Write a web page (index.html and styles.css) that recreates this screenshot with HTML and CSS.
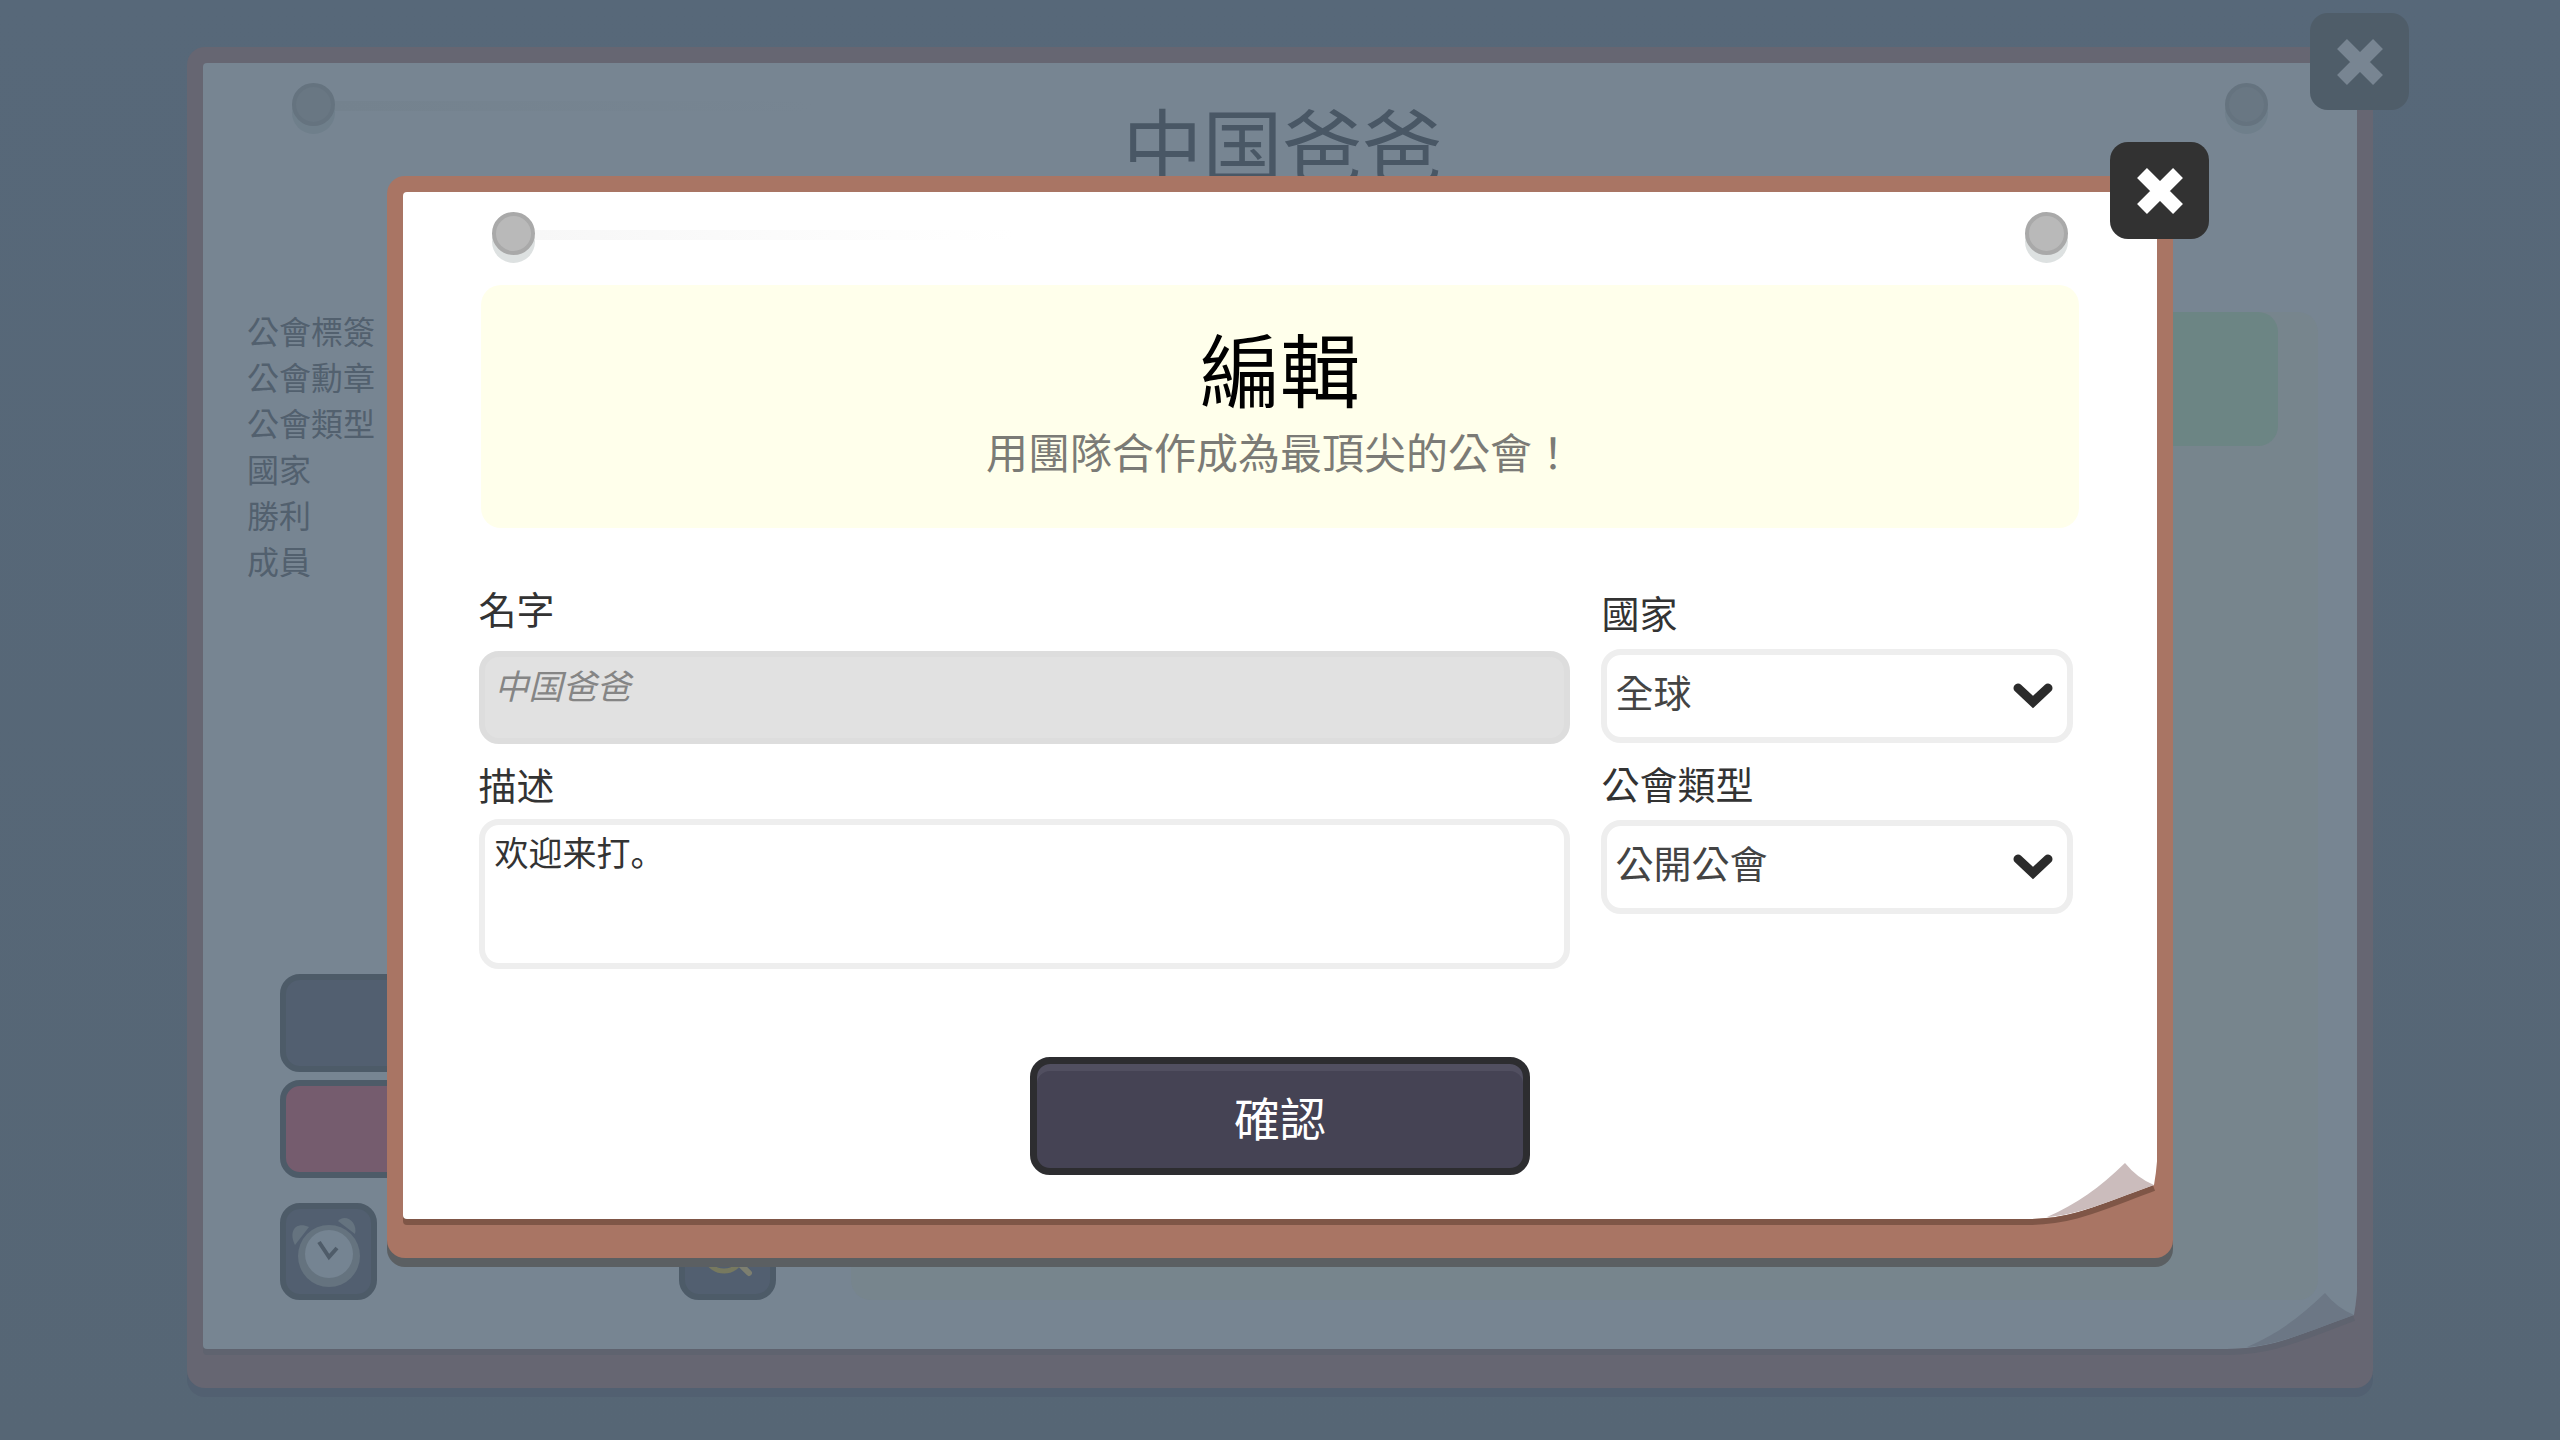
FILE: index.html
```html
<!DOCTYPE html>
<html lang="zh-Hant">
<head>
  <meta charset="UTF-8">
  <meta name="viewport" content="width=device-width, initial-scale=1">
  <title>公會</title>
  <link rel="stylesheet" href="styles.css">
</head>
<body>

  <!-- Guild page, dimmed behind the dialog -->
  <main class="panel panel-guild">
    <div class="paper guild">
      <span class="pin pin-left"></span>
      <span class="pin pin-right"></span>
      <h1 lang="zh-Hans">中国爸爸</h1>

      <div class="guild-main">
        <div class="sidebar">
          <ul class="facts">
            <li>公會標簽</li>
            <li>公會勳章</li>
            <li>公會類型</li>
            <li>國家</li>
            <li>勝利</li>
            <li>成員</li>
          </ul>
          <div class="actions">
            <button class="wide-button" type="button" aria-label="編輯"></button>
            <button class="wide-button leave" type="button" aria-label="離開"></button>
            <div class="tools">
              <button class="tool" type="button" aria-label="clock">
                <svg viewBox="0 0 97 97">
                  <path d="M15 42 C8 28 16 18 29 24 Z" fill="#65737f"/>
                  <path d="M58 18 C66 10 78 20 75 31 Z" fill="#65737f"/>
                  <circle cx="49" cy="53" r="31" fill="#65737f"/>
                  <circle cx="49" cy="51" r="24" fill="#758492"/>
                  <path d="M39 39 L49 54 L57 45" fill="none" stroke="#4f5c69" stroke-width="4"/>
                </svg>
              </button>
              <button class="tool" type="button" aria-label="search">
                <svg viewBox="0 0 97 97">
                  <circle cx="45" cy="49" r="19" fill="none" stroke="#77795f" stroke-width="5"/>
                  <path d="M58 58 L70 70" stroke="#7d7f70" stroke-width="6" stroke-linecap="round"/>
                </svg>
              </button>
            </div>
          </div>
        </div>
        <div class="members">
          <div class="member"></div>
        </div>
      </div>

      <svg class="curl" viewBox="0 0 134 110">
        <path d="M0 101 C45 101 70 88 127 67 Q132 40 131 0 H134 V110 H0 Z" fill="#666672"/>
        <path d="M0 104 C45 104 70 91 127 70" fill="none" stroke="#5f636f" stroke-width="6"/>
        <path d="M20 99 C50 86 72 70 98 45 Q110 60 127 67 C75 86 50 97 20 99 Z" fill="#6c7785"/>
      </svg>
    </div>
    <button class="close" type="button" aria-label="close">
      <svg viewBox="0 0 52 52"><path d="M8 8 L44 44 M44 8 L8 44" stroke="currentColor" stroke-width="14"/></svg>
    </button>
  </main>

  <!-- Edit dialog -->
  <div class="overlay">
    <div class="panel panel-dialog" role="dialog" aria-labelledby="dialogTitle">
      <form class="paper dialog">
        <span class="pin pin-left"></span>
        <span class="pin pin-right"></span>

        <header class="banner">
          <h2 id="dialogTitle">編輯</h2>
          <p>用團隊合作成為最頂尖的公會！</p>
        </header>

        <div class="fields">
          <div class="column">
            <div class="field field-name">
              <label for="name">名字</label>
              <input id="name" type="text" value="中国爸爸" lang="zh-Hans" disabled>
            </div>
            <div class="field field-area">
              <label for="description" lang="zh-Hans">描述</label>
              <textarea id="description" lang="zh-Hans">欢迎来打。</textarea>
            </div>
          </div>
          <div class="column column-selects">
            <div class="field">
              <label for="country">國家</label>
              <div class="select">
                <select id="country">
                  <option>全球</option>
                </select>
                <svg viewBox="0 0 40 26"><path d="M5 5 L20 19 L35 5" fill="none" stroke="#2b2b2b" stroke-width="9" stroke-linecap="round"/></svg>
              </div>
            </div>
            <div class="field">
              <label for="type">公會類型</label>
              <div class="select">
                <select id="type">
                  <option>公開公會</option>
                </select>
                <svg viewBox="0 0 40 26"><path d="M5 5 L20 19 L35 5" fill="none" stroke="#2b2b2b" stroke-width="9" stroke-linecap="round"/></svg>
              </div>
            </div>
          </div>
        </div>

        <button class="confirm" type="button">確認</button>

        <svg class="curl" viewBox="0 0 134 110">
          <path d="M0 101 C45 101 70 88 127 67 Q132 40 131 0 H134 V110 H0 Z" fill="#a97564"/>
          <path d="M0 104 C45 104 70 91 127 70" fill="none" stroke="#7f5647" stroke-width="6"/>
          <path d="M20 99 C50 86 72 70 98 45 Q110 60 127 67 C75 86 50 97 20 99 Z" fill="#cbbcbc"/>
        </svg>
      </form>
      <button class="close" type="button" aria-label="close">
        <svg viewBox="0 0 52 52"><path d="M8 8 L44 44 M44 8 L8 44" stroke="currentColor" stroke-width="14"/></svg>
      </button>
    </div>
  </div>

</body>
</html>
```
FILE: styles.css
```css
* {
  margin: 0;
  padding: 0;
  box-sizing: border-box;
}

body {
  min-height: 100vh;
  padding: 47px 7.3% 52px;
  display: flex;
  background: linear-gradient(#576879, #566675);
  color: #333;
  font-family: "Noto Sans CJK TC", "Noto Sans", sans-serif;
}

:lang(zh-Hans) {
  font-family: "Noto Sans CJK SC", "Noto Sans", sans-serif;
}

button,
input,
textarea,
select {
  font-family: inherit;
}

h1,
h2 {
  font-size: 80px;
  line-height: 96px;
  font-weight: 400;
  text-align: center;
}

/* Wooden board with a sheet of paper on it */
.panel {
  position: relative;
  display: flex;
  padding: 16px 16px 39px;
  border-radius: 18px;
  background: var(--wood);
  box-shadow: 0 9px 0 var(--shadow);
}

.panel-guild {
  --wood: #666672;
  --shadow: #526071;
  --paper: #778592;
  --edge: #5f636f;
  --pin: #697783;
  --pin-edge: #65737f;
  --pin-shadow: #6f7f8b;
  --streak: #74828e;
  flex: 1;
}

.panel-dialog {
  --wood: #a97564;
  --shadow: #5b5f62;
  --paper: #fff;
  --edge: #7f5647;
  --pin: #b9b9b9;
  --pin-edge: #a9a9a9;
  --pin-shadow: #dde1e1;
  --streak: #f7f7f7;
}

.paper {
  position: relative;
  flex: 1;
  display: flex;
  flex-direction: column;
  border-radius: 4px;
  background: var(--paper);
  box-shadow: 0 6px 0 var(--edge);
}

.pin {
  position: absolute;
  top: 20px;
  width: 43px;
  height: 43px;
  border: 4px solid var(--pin-edge);
  border-radius: 50%;
  background: var(--pin);
  box-shadow: 0 8px 0 var(--pin-shadow);
}

.pin-left {
  left: 89px;
}

.pin-right {
  right: 89px;
}

/* Scratch running from the left pin */
.pin-left::after {
  content: '';
  position: absolute;
  top: 14px;
  left: 39px;
  width: 480px;
  height: 10px;
  background: linear-gradient(to right, var(--streak), transparent);
}

.curl {
  position: absolute;
  right: -4px;
  bottom: -9px;
  width: 134px;
  height: 110px;
}

.close {
  position: absolute;
  top: -34px;
  right: -36px;
  width: 99px;
  height: 97px;
  display: flex;
  align-items: center;
  justify-content: center;
  border: none;
  border-radius: 18px;
  background: #323232;
  color: #fff;
}

.close svg {
  width: 52px;
  height: 52px;
}

.panel-guild .close {
  background: #4f5d69;
  color: #788592;
}

/* Guild page */
.guild {
  padding: 30px 39px 49px 44px;
}

.guild h1 {
  color: #495765;
}

.guild-main {
  flex: 1;
  display: flex;
  margin-top: 118px;
}

.sidebar {
  flex: 0 0 604px;
  display: flex;
  flex-direction: column;
}

.facts {
  list-style: none;
  color: #52606e;
  font-size: 32px;
  line-height: 46px;
}

.actions {
  display: flex;
  flex-direction: column;
  gap: 8px;
  margin: auto 75px 0 33px;
}

.wide-button {
  height: 98px;
  border: 6px solid #4d5b68;
  border-radius: 20px;
  background: #525f70;
}

.leave {
  background: #755c6e;
}

.tools {
  display: flex;
  justify-content: space-between;
  margin-top: 17px;
}

.tool {
  width: 97px;
  height: 97px;
  border: 6px solid #4d5b68;
  border-radius: 20px;
  background: #525f70;
}

.tool svg {
  display: block;
  width: 97px;
  height: 97px;
  margin: -6px;
}

.members {
  flex: 1;
  margin-top: 5px;
  padding-right: 40px;
  border-radius: 20px;
  background: #77858d;
}

.member {
  height: 134px;
  border-radius: 20px;
  background: #6c8584;
}

/* Dialog */
.overlay {
  position: absolute;
  top: 0;
  left: 0;
  width: 100%;
  padding: 176px 15.1%;
}

.dialog {
  padding: 93px 76px 44px;
}

.banner {
  margin: 0 2px;
  padding: 33px 20px 52px;
  border-radius: 20px;
  background: #ffffeb;
  text-align: center;
}

.banner h2 {
  color: #000;
}

.banner p {
  margin-top: 12px;
  color: #7b7b76;
  font-size: 42px;
  line-height: 50px;
}

.fields {
  display: flex;
  gap: 31px;
  margin: 57px 8px 0 0;
}

.column {
  flex: 1;
  display: flex;
  flex-direction: column;
  gap: 17px;
}

.column-selects {
  flex: 0 0 472px;
  padding-top: 4px;
}

.field {
  display: flex;
  flex-direction: column;
  gap: 14px;
}

.field-name {
  gap: 20px;
}

.field-area {
  gap: 12px;
}

label {
  font-size: 38px;
  line-height: 46px;
}

input,
textarea,
select {
  width: 100%;
  border: 6px solid #eee;
  border-radius: 20px;
  background: #fff;
  color: #333;
}

input {
  height: 93px;
  padding: 0 10px 26px;
  border-color: #ddd;
  background: #e1e1e1;
  color: #858585;
  font-size: 34px;
  font-style: italic;
}

textarea {
  display: block;
  height: 150px;
  padding: 6px 10px;
  font-size: 34px;
  line-height: 42px;
  resize: none;
}

.select {
  position: relative;
}

select {
  display: block;
  height: 94px;
  padding: 0 8px 12px;
  appearance: none;
  color: #444;
  font-size: 38px;
}

.select svg {
  position: absolute;
  top: 34px;
  right: 20px;
  width: 40px;
  height: 26px;
  pointer-events: none;
}

.confirm {
  align-self: center;
  width: 500px;
  height: 118px;
  margin-top: 88px;
  border: 7px solid #2d2d30;
  border-radius: 20px;
  background: #454354;
  box-shadow: inset 0 7px 0 #514f60;
  color: #fff;
  font-size: 46px;
}
```
